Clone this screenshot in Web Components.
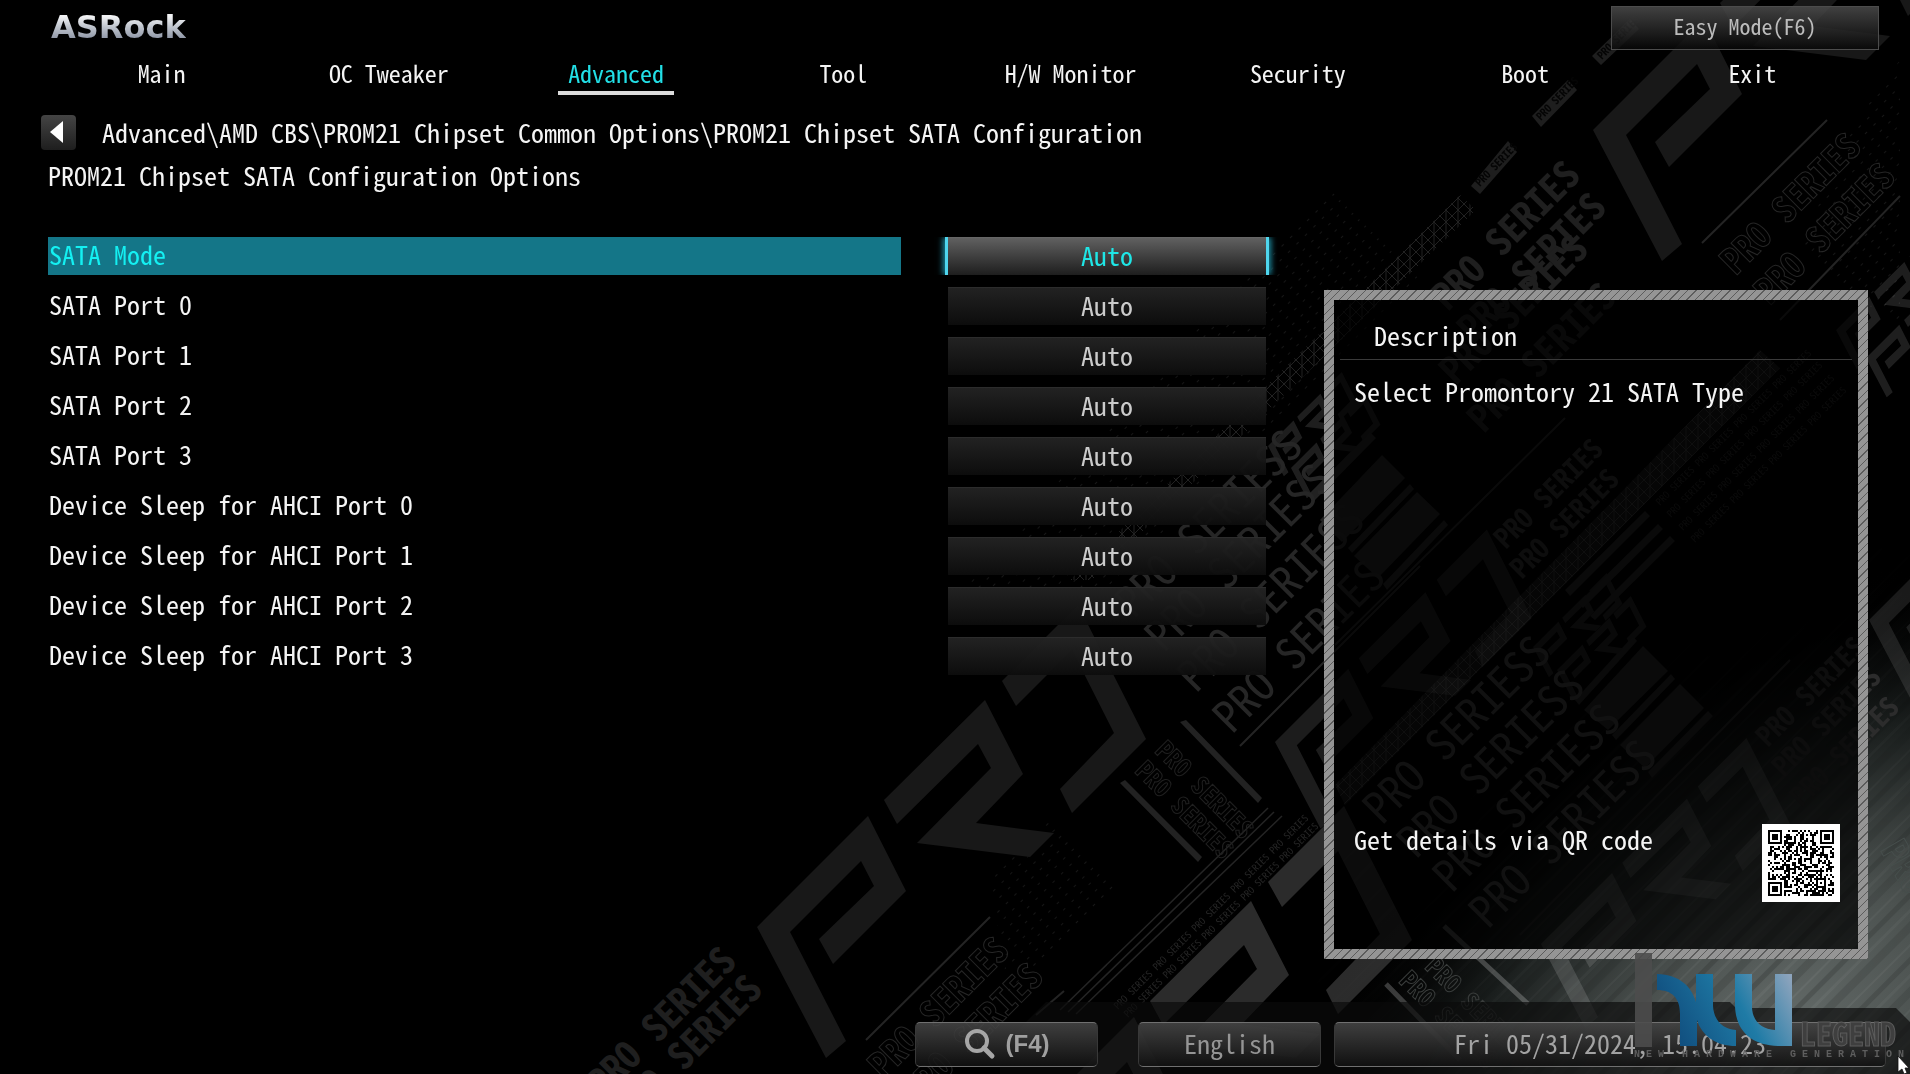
<!DOCTYPE html>
<html lang="en">
<head>
<meta charset="utf-8">
<title>UEFI Setup Utility</title>
<style>
  html, body { margin: 0; background: #000; }
  body {
    color: #f4f4f4;
    font-family: "Noto Sans Mono CJK SC", "Noto Sans CJK SC", "Liberation Mono", monospace;
    font-feature-settings: "hwid";
    font-size: 26px;
    line-height: 38px;
    --accent: #1fe6e6;
  }
</style>
</head>
<body>
<uefi-screen>
  <uefi-header slot="header">
    <uefi-tab>Main</uefi-tab>
    <uefi-tab>OC Tweaker</uefi-tab>
    <uefi-tab current>Advanced</uefi-tab>
    <uefi-tab>Tool</uefi-tab>
    <uefi-tab>H/W Monitor</uefi-tab>
    <uefi-tab>Security</uefi-tab>
    <uefi-tab>Boot</uefi-tab>
    <uefi-tab>Exit</uefi-tab>
  </uefi-header>
  <uefi-path slot="path">
    Advanced\AMD CBS\PROM21 Chipset Common Options\PROM21 Chipset SATA Configuration
    <span slot="title">PROM21 Chipset SATA Configuration Options</span>
  </uefi-path>
  <uefi-option value="Auto" selected>SATA Mode</uefi-option>
  <uefi-option value="Auto">SATA Port 0</uefi-option>
  <uefi-option value="Auto">SATA Port 1</uefi-option>
  <uefi-option value="Auto">SATA Port 2</uefi-option>
  <uefi-option value="Auto">SATA Port 3</uefi-option>
  <uefi-option value="Auto">Device Sleep for AHCI Port 0</uefi-option>
  <uefi-option value="Auto">Device Sleep for AHCI Port 1</uefi-option>
  <uefi-option value="Auto">Device Sleep for AHCI Port 2</uefi-option>
  <uefi-option value="Auto">Device Sleep for AHCI Port 3</uefi-option>
  <uefi-description slot="side">
    <span slot="heading">Description</span>
    Select Promontory 21 SATA Type
    <span slot="hint">Get details via QR code</span>
  </uefi-description>
  <uefi-footer slot="footer"></uefi-footer>
</uefi-screen>
<script>
const define = (name, html, setup) => customElements.define(name, class extends HTMLElement {
  connectedCallback() {
    if (this.shadowRoot) return;
    const root = this.attachShadow({ mode: 'open' });
    root.innerHTML = html;
    if (setup) setup(this, root);
  }
});

/* Backdrop: the diagonal PRO SERIES artwork */
define('uefi-backdrop', `
<style>
  :host { display: block; position: absolute; inset: 0; overflow: hidden; }
  svg { display: block; width: 100%; height: 100%; }
  text { font-family: "Liberation Sans Narrow", "Noto Sans CJK SC", sans-serif; }
</style>
<svg viewBox="0 0 1910 1074" preserveAspectRatio="xMaxYMax slice" aria-hidden="true">
  <defs>
    <radialGradient id="glow" gradientUnits="userSpaceOnUse" cx="0" cy="0" r="1" gradientTransform="translate(1770 1040) rotate(-40) scale(620 370)">
      <stop offset="0" stop-color="#666d6b"/><stop offset=".3" stop-color="#4c5250"/>
      <stop offset=".65" stop-color="#1a1e1d"/><stop offset="1" stop-color="#000" stop-opacity="0"/>
    </radialGradient>
    <pattern id="streak" width="46" height="46" patternUnits="userSpaceOnUse" patternTransform="rotate(-45)">
      <rect width="46" height="5" y="3" fill="#000" opacity=".16"/><rect width="46" height="3" y="15" fill="#fff" opacity=".05"/>
      <rect width="46" height="8" y="24" fill="#000" opacity=".12"/><rect width="46" height="2" y="40" fill="#fff" opacity=".06"/>
    </pattern>
    <radialGradient id="fade" gradientUnits="userSpaceOnUse" cx="1780" cy="1000" r="480">
      <stop offset="0" stop-color="#fff"/><stop offset="1" stop-color="#000"/>
    </radialGradient>
    <mask id="near"><rect width="1910" height="1074" fill="url(#fade)"/></mask>
    <g id="pr7">
      <path d="M868 816 906 891 833 964 819 939 874 886 861 861 790 932 846 1041 826 1058 757 927Z"/>
      <path d="M985 700 1023 774 976 823 1054 833 1030 857 917 843 991 768 978 744 897 824 884 800Z"/>
      <path d="M1078 605 1146 739 1072 813 1060 789 1114 733 1072 650 1016 706 1002 681Z"/>
    </g>
    <pattern id="dots" width="12" height="9" patternUnits="userSpaceOnUse" patternTransform="rotate(-45)">
      <rect width="3" height="1" fill="#161616"/>
    </pattern>
    <pattern id="weave" width="12" height="12" patternUnits="userSpaceOnUse">
      <path d="M0 0 12 12M12 0 0 12M6 0V12" stroke="#222" fill="none"/>
    </pattern>
  </defs>
  <rect width="1910" height="1074" fill="#000"/>
  <rect x="1000" y="400" width="910" height="674" fill="url(#glow)"/>
  <rect x="1200" y="500" width="710" height="574" fill="url(#streak)" mask="url(#near)"/>
  <path d="M1270 250 1330 190 1420 280 1100 600 950 600Z" fill="url(#dots)"/>
  <path d="M1045 815 1120 890 1010 1000 990 880Z" fill="url(#dots)"/>
  <path d="M1900 60V330L1800 250 1850 130Z" fill="url(#dots)"/>
  <path d="M1070 580 1460 195 1476 210 1092 580Z" fill="url(#weave)"/>
  <path d="M1335 785 1760 350 1780 368 1345 805Z" fill="url(#weave)"/>
  <path d="M1335 785 1760 350 1780 368 1345 805Z" fill="#fff" opacity=".08"/>
  <g fill="#181818">
    <use href="#pr7"/>
    <use href="#pr7" transform="translate(836 -797)"/>
  </g>
  <g fill="#fff">
    <use href="#pr7" transform="translate(266 201)" opacity=".17"/>
    <use href="#pr7" transform="translate(1275 742) scale(.66) translate(-757 -927)" opacity=".11"/>
    <use href="#pr7" transform="translate(1541 944) scale(.64) translate(-757 -927)" opacity=".13"/>
    <use href="#pr7" transform="translate(1869 620) scale(.6) translate(-757 -927)" opacity=".1"/>
    <g opacity=".12">
      <use href="#pr7" transform="translate(1268 446) scale(.23) translate(-757 -927)"/>
      <use href="#pr7" transform="translate(1291 468) scale(.23) translate(-757 -927)"/>
      <use href="#pr7" transform="translate(1533 647) scale(.23) translate(-757 -927)"/>
      <use href="#pr7" transform="translate(1557 670) scale(.23) translate(-757 -927)"/>
      <use href="#pr7" transform="translate(1836 330) scale(.3) translate(-757 -927)"/>
      <use href="#pr7" transform="translate(1866 358) scale(.3) translate(-757 -927)"/>
    </g>
  </g>
  <g fill="#222">
    <path d="M1308 495 1370 432 1376 438 1314 501ZM1320 520 1382 455 1405 478 1342 542ZM1348 548 1410 484 1414 489 1352 553ZM1354 556 1417 492 1440 514 1378 578ZM1383 584 1444 520 1448 525 1387 590Z"/>
    <path d="M1565 590 1645 511 1650 516 1570 596ZM1578 603 1658 524 1663 529 1583 608ZM1590 616 1670 536 1675 541 1595 620ZM1575 700 1633 636 1637 641 1579 705ZM1584 710 1643 646 1668 671 1608 730ZM1612 735 1671 674 1675 679 1616 740ZM1620 745 1680 684 1704 708 1645 768ZM1648 772 1708 711 1713 716 1652 778Z"/>
    <path d="M1180 722 1186 720 1262 798 1258 803ZM1120 783 1125 780 1202 857 1198 862Z"/>
  </g>
  <g stroke="#242424" stroke-width="2" fill="none">
    <path d="M866 1040 990 917M1240 746 1420 566M1702 243 1827 120M1780 320 1900 196M1335 645 1565 418M1520 935 1790 660M1036 1015 1064 991"/>
    <path d="M1060 1010 1268 808M1068 1012 1274 812M1076 1014 1282 816" stroke-width="1.5"/>
  </g>
  <g stroke="#fff" stroke-opacity=".22" stroke-width="5"><path d="M1386 984 1460 1060M1444 926 1528 1004"/></g>
  <g font-weight="700" font-size="38" fill="#1f1f1f">
    <text transform="translate(604 1098) rotate(-45)">PRO SERIES</text>
    <text transform="translate(630 1126) rotate(-45)">PRO SERIES</text>
    <text transform="translate(1448 312) rotate(-45)">PRO SERIES</text>
    <text transform="translate(1474 344) rotate(-45)">PRO SERIES</text>
    <text transform="translate(1456 386) rotate(-45)">PRO SERIES</text>
    <text transform="translate(1484 434) rotate(-45)">PRO SERIES</text>
  </g>
  <g font-weight="700" font-size="28" fill="#2c2c2c">
    <text transform="translate(1506 550) rotate(-45)">PRO SERIES</text>
    <text transform="translate(1522 580) rotate(-45)">PRO SERIES</text>
    <text transform="translate(1768 748) rotate(-45)">PRO SERIES</text>
    <text transform="translate(1784 778) rotate(-45)">PRO SERIES</text>
    <text transform="translate(1802 808) rotate(-45)">PRO SERIES</text>
  </g>
  <g font-size="44" fill="#262626">
    <text transform="translate(1134 620) rotate(-45)">PRO SERIESS</text>
    <text transform="translate(1164 654) rotate(-45)">PRO SERIESS</text>
    <text transform="translate(1196 694) rotate(-45)">PRO SERIESS</text>
    <text transform="translate(1232 735) rotate(-45)">PRO SERIES</text>
  </g>
  <g font-size="44" fill="#3a3a3a">
    <text transform="translate(1382 826) rotate(-45)">PRO SERIESS</text>
    <text transform="translate(1416 860) rotate(-45)">PRO SERIESS</text>
    <text transform="translate(1452 894) rotate(-45)">PRO SERIESS</text>
    <text transform="translate(1488 930) rotate(-45)">PRO SERIESS</text>
  </g>
  <g font-size="36" font-weight="700" fill="none" stroke="#262626">
    <text transform="translate(884 1080) rotate(-45)">PRO SERIES</text>
    <text transform="translate(918 1106) rotate(-45)">PRO SERIES</text>
    <text transform="translate(1736 276) rotate(-45)">PRO SERIES</text>
    <text transform="translate(1770 306) rotate(-45)">PRO SERIES</text>
    <text transform="translate(1880 850) rotate(60)" stroke="#464e4c">PRO</text>
  </g>
  <g font-size="25" font-weight="700" fill="none" stroke="#202020">
    <text transform="translate(1154 752) rotate(45)">PRO SERIES</text>
    <text transform="translate(1134 772) rotate(45)">PRO SERIES</text>
    <text transform="translate(1424 968) rotate(45)" stroke="#3a3d3c">PRO SERIES</text>
    <text transform="translate(1398 982) rotate(45)" stroke="#3a3d3c">PRO SERIES</text>
  </g>
  <g fill="#1e1e1e">
    <path d="M1471 186 1508 141 1517 152 1480 194ZM1532 116 1568 80 1577 90 1541 127ZM1592 56 1630 19 1639 29 1601 65Z"/>
  </g>
  <g font-size="11" font-weight="700" fill="#050505">
    <text transform="translate(1480 187) rotate(-46)">PRO SERIES</text>
    <text transform="translate(1541 121) rotate(-46)">PRO SERIES</text>
    <text transform="translate(1602 60) rotate(-46)">PRO SERIES</text>
  </g>
  <g font-size="10" fill="#242424">
    <text transform="translate(1118 1010) rotate(-45)">PRO SERIES PRO SERIES PRO SERIES PRO SERIES PRO SERIES</text>
    <text transform="translate(1128 1018) rotate(-45)">PRO SERIES PRO SERIES PRO SERIES PRO SERIES PRO SERIES</text>
    <text transform="translate(1660 506) rotate(-45)">PRO SERIES PRO SERIES PRO SERIES PRO SERIES</text>
    <text transform="translate(1671 518) rotate(-45)">PRO SERIES PRO SERIES PRO SERIES PRO SERIES</text>
    <text transform="translate(1683 531) rotate(-45)">PRO SERIES PRO SERIES PRO SERIES PRO SERIES</text>
    <text transform="translate(1695 543) rotate(-45)">PRO SERIES PRO SERIES PRO SERIES PRO SERIES</text>
  </g>
  <path d="M1150 1002H1730L1736 1008H1896L1910 1022V1074H1000V1038H1010L1046 1002Z" fill="#0a0b0b" opacity=".68"/>
</svg>`);

/* Page frame */
define('uefi-screen', `
<style>
  :host { display: flex; flex-direction: column; position: relative; min-height: 100vh; overflow: hidden; }
  header, main, footer { position: relative; }
  header { display: block; }
  main { flex: 1; display: flex; gap: 58px; align-items: flex-start; padding: 0 42px 0 48px; }
  .list { flex: 1; display: grid; gap: 12px; padding-top: 43px; }
  .side { width: 544px; padding-top: 96px; }
</style>
<uefi-backdrop></uefi-backdrop>
<header><slot name="header"></slot><slot name="path"></slot></header>
<main>
  <div class="list"><slot></slot></div>
  <div class="side"><slot name="side"></slot></div>
</main>
<footer><slot name="footer"></slot></footer>
<uefi-watermark></uefi-watermark>`);

define('uefi-header', `
<style>
  :host { display: block; }
  .top { display: flex; justify-content: space-between; align-items: flex-start; padding: 6px 31px 0 51px; }
  .logo {
    font: 700 32px/42px "DejaVu Sans", sans-serif;
    background: linear-gradient(#f2f3f5 25%, #bfc4cd 50%, #8b93a3 80%);
    -webkit-background-clip: text; background-clip: text; color: transparent;
  }
  button {
    width: 268px; height: 44px; padding: 0 0 6px; box-sizing: border-box;
    border: 1px solid #4c4c4c; background: linear-gradient(rgba(80,80,80,.8), rgba(8,8,8,.8));
    color: #bcbcbc; font: inherit; font-size: 22px; line-height: 30px; font-feature-settings: inherit;
  }
  nav { display: flex; padding: 5px 44px 0 48px; }
</style>
<div class="top"><div class="logo">ASRock</div><button>Easy Mode(F6)</button></div>
<nav><slot></slot></nav>`);

define('uefi-tab', `
<style>
  :host { flex: 1; display: flex; justify-content: center; font-size: 24px; line-height: 36px; }
  a { color: inherit; text-decoration: none; padding: 0 10px; border-bottom: 4px solid transparent; }
  :host([current]) a { color: #22dfe6; border-color: #dcdcdc; }
</style>
<a href="#"><slot></slot></a>`);

define('uefi-path', `
<style>
  :host { display: block; padding: 18px 41px 0; }
  .row { display: flex; align-items: center; gap: 26px; }
  button {
    display: flex; align-items: center; justify-content: center; width: 35px; height: 35px; padding: 0 4px 0 0;
    border: 0; border-radius: 4px; background: linear-gradient(#444, #1e1e1e);
  }
  .title { padding: 5px 7px 0; }
</style>
<div class="row">
  <button aria-label="Back"><svg width="13" height="22" viewBox="0 0 13 22"><path d="M13 0V22L0 11Z" fill="#fff"/></svg></button>
  <span><slot></slot></span>
</div>
<div class="title"><slot name="title"></slot></div>`);

define('uefi-option', `
<style>
  :host { display: flex; gap: 47px; height: 38px; }
  label { flex: 1; padding: 0 1px; line-height: 34px; }
  button {
    width: 318px; padding: 0 0 4px; border: 0; border-top: 1px solid #2c2c2c;
    background: linear-gradient(rgba(36,36,36,.95), rgba(13,13,13,.95));
    color: #cbcbcb; font: inherit; line-height: 33px; font-feature-settings: inherit;
  }
  :host([selected]) label { background: #147688; color: #14f0f2; }
  :host([selected]) button {
    background: linear-gradient(#606060, #1e1e1e); border-color: #666; color: var(--accent);
    box-shadow: -3px 0 #4fd6ee, 3px 0 #4fd6ee, -5px 0 6px #1d8ea4, 5px 0 6px #1d8ea4;
    clip-path: inset(0 -14px);
  }
</style>
<label id="name" for="value"><slot></slot></label>
<button id="value" aria-haspopup="listbox"></button>`, (el, root) => {
  root.querySelector('button').textContent = el.getAttribute('value');
});

define('uefi-description', `
<style>
  :host {
    display: flex; flex-direction: column; height: 669px; box-sizing: border-box; padding: 16px 6px 47px;
    border: 10px solid; border-image: repeating-linear-gradient(135deg, #959595 0 5px, #5c5c5c 5px 6px) 10;
    background: rgba(0,0,0,.7) padding-box;
  }
  h2 { margin: 0; padding: 0 34px 5px; border-bottom: 1px solid #3a3a3a; font: inherit; }
  p { margin: 0; padding: 12px 14px; flex: 1; }
  .foot { display: flex; justify-content: space-between; align-items: flex-start; padding: 0 12px 0 14px; line-height: 30px; }
</style>
<h2><slot name="heading"></slot></h2>
<p><slot></slot></p>
<div class="foot"><slot name="hint"></slot><uefi-qr></uefi-qr></div>`);

define('uefi-qr', `
<style>:host { display: block; width: 78px; height: 78px; background: #fff; } svg { display: block; width: 100%; height: 100%; }</style>
<svg viewBox="-3 -3 39 39" shape-rendering="crispEdges" role="img" aria-label="QR code"><path/></svg>`, (el, root) => {
  const n = 33, finder = (x, y) => {
    for (const [a, b] of [[0, 0], [n - 7, 0], [0, n - 7]]) {
      const d = Math.max(Math.abs(x - a - 3), Math.abs(y - b - 3));
      if (d <= 4) return d !== 4 && d !== 2;
    }
    const d = Math.max(Math.abs(x - 26), Math.abs(y - 26));
    return d <= 2 ? d !== 1 : null;
  };
  let seed = 2024, d = '';
  for (let y = 0; y < n; y++) for (let x = 0; x < n; x++) {
    seed = (seed * 1103515 + 12345) % 2147483648;
    const f = finder(x, y);
    if (f === null ? (seed >> 16) & 1 : f) d += `M${x} ${y}h1v1h-1z`;
  }
  root.querySelector('path').setAttribute('d', d);
});

define('uefi-footer', `
<style>
  :host { display: flex; justify-content: flex-end; gap: 13px; padding: 0 24px 7px; }
  button, time {
    box-sizing: border-box; height: 45px; width: 183px; display: flex; align-items: center; justify-content: center;
    border: 1px solid #383838; border-top-color: #707070; border-bottom-color: #707070; border-radius: 5px;
    background: linear-gradient(rgba(72,72,72,.85), rgba(18,18,18,.85)); color: #959595;
    font: inherit; font-feature-settings: inherit; padding: 0 0 3px;
  }
  .find { margin-right: 27px; gap: 10px; font: 700 24px/28px "Liberation Sans", sans-serif; color: #a0a0a0; padding: 0 0 1px; }
  time { width: 552px; color: #a3a3a3; }
</style>
<button class="find"><svg width="32" height="32" viewBox="0 0 32 32" fill="none" stroke="#a6a6a6"><circle cx="13" cy="13" r="10" stroke-width="4"/><path d="M20 20 28 28" stroke-width="5" stroke-linecap="round"/></svg>(F4)</button>
<button>English</button>
<time>Fri 05/31/2024, 15:04:23</time>`);

define('uefi-watermark', `
<style>
  :host { position: absolute; right: 0; bottom: 0; width: 290px; height: 134px; pointer-events: none; }
  svg { display: block; }
</style>
<svg width="290" height="134" viewBox="0 0 290 134">
  <defs><linearGradient id="b" gradientUnits="userSpaceOnUse" x1="60" y1="100" x2="172" y2="40">
    <stop offset="0" stop-color="#115080"/><stop offset=".55" stop-color="#1f7ba6"/><stop offset="1" stop-color="#8da4bd"/>
  </linearGradient></defs>
  <rect x="15" y="13" width="17" height="94" fill="#4c4c4c" opacity=".9"/>
  <g fill="url(#b)">
    <path d="M37 34C60 35 71 46 76 62V34H93V66C94 81 103 89 116 90V106C96 106 82 96 77 80V106H60V74C60 58 52 50 37 50Z"/>
    <path d="M115 34H132V68C133 82 142 89 155 90V34H172V106H158C132 105 116 92 115 66Z"/>
  </g>
  <text x="180" y="106" font-size="32" font-weight="700" fill="#3f3f3f" stroke="#5c5c5c">LEGEND</text>
  <text x="14" y="117" font-size="10" font-weight="700" fill="#5e5e5e" style="font-family:'Liberation Mono',monospace;white-space:pre">N E W   H A R D W A R E   G E N E R A T I O N</text>
  <path d="M278 116V132L282 129 284 134 287 133 285 128H289Z" fill="#fff" stroke="#111" stroke-width=".8"/>
</svg>`);
</script>
</body>
</html>
